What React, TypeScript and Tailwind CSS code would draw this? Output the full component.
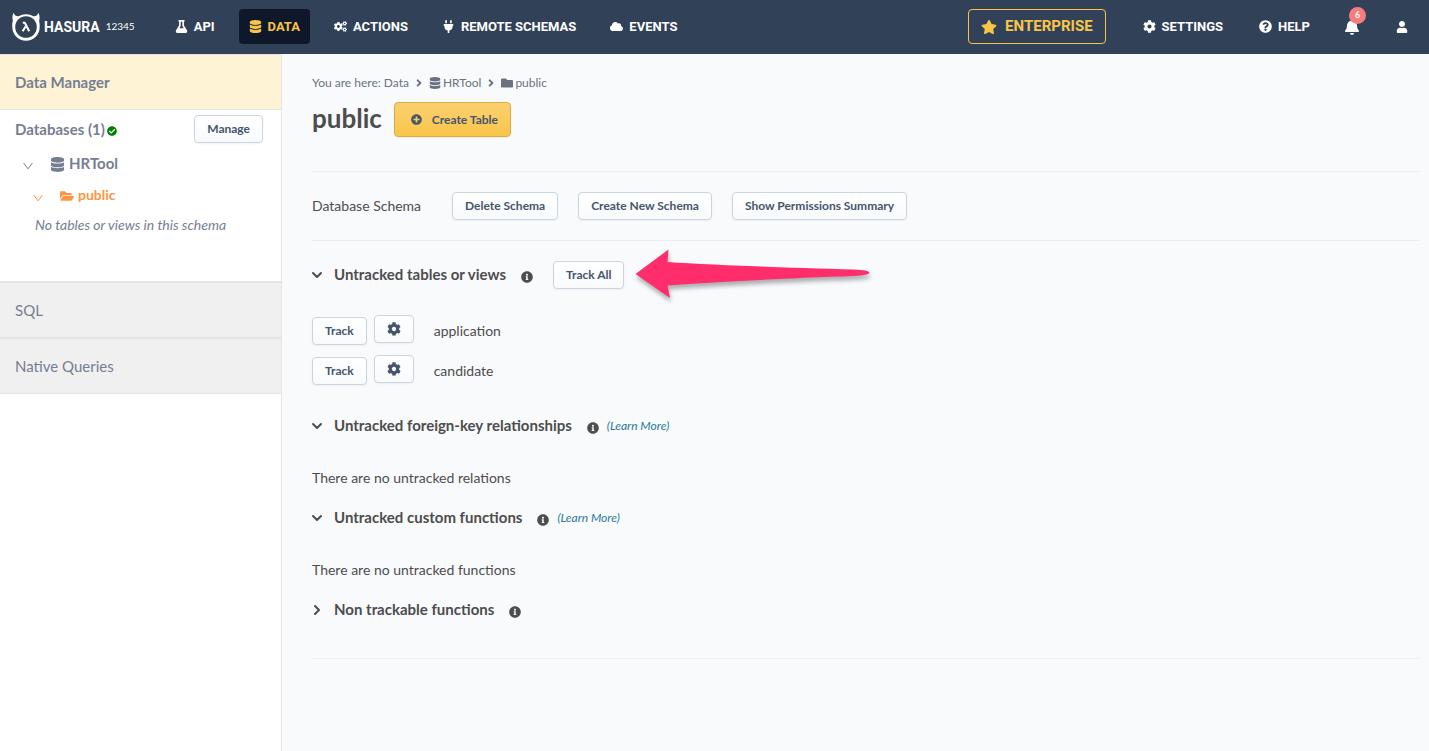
import React from "react";
import {
	FaBell,
	FaCheckCircle,
	FaCloud,
	FaCog,
	FaCogs,
	FaDatabase,
	FaFolder,
	FaFolderOpen,
	FaInfoCircle,
	FaPlug,
	FaPlusCircle,
	FaQuestionCircle,
	FaStar,
	FaAngleRight,
	FaUser,
} from "react-icons/fa";
import { FaFlask } from "react-icons/fa6";
import { ChevronDown, ChevronRight } from "lucide-react";
import clsx from "clsx";

interface NavItemProps {
	icon: React.ReactNode;
	label: string;
	active?: boolean;
}

const NavItem: React.FC<NavItemProps> = ({ icon, label, active = false }) => (
	<a
		href="#"
		className={clsx(
			"flex h-[35px] items-center gap-[6px] rounded px-[10px] font-['Roboto'] text-[13px] font-bold whitespace-nowrap",
			active ? "bg-slate-900 text-[#f9c548]" : "text-white"
		)}
	>
		<span className="flex w-[13px] justify-center">{icon}</span>
		{label}
	</a>
);

const Button: React.FC<React.ButtonHTMLAttributes<HTMLButtonElement>> = ({ className, ...props }) => (
	<button
		type="button"
		className={clsx(
			"flex h-7 items-center justify-center rounded border border-slate-300 bg-linear-to-b from-white to-slate-50 px-3 text-xs font-bold whitespace-nowrap text-slate-600 shadow-xs",
			className
		)}
		{...props}
	/>
);

const Logo = () => (
	<a href="#" className="flex items-center gap-1 text-white" aria-label="Hasura">
		<svg width="28" height="29" viewBox="0 0 28 29" fill="none">
			<path
				d="M1.6.8C.2 3.600.1 6.200.9 8.700A13.700 13.700 0 0 0 .3 15a13.700 13.700 0 0 0 27.400 0c0-2.300-.1-4.300-.6-6.300.8-2.500.7-5.100-.7-7.900-.8 2.500-2.500 3.700-5 3.500A13.700 13.700 0 0 0 14 2.300c-2.700 0-5.200.7-7.400 2C4.100 4.500 2.400 3.300 1.600.8Z"
				fill="currentColor"
			/>
			<circle cx="14" cy="15" r="10.800" fill="#334155" />
			<path
				d="M10.800 10.700h2l4.400 8.600M13.600 14.400l-3 4.900"
				stroke="currentColor"
				strokeWidth="2"
				strokeLinejoin="round"
			/>
		</svg>
		<span className="font-['Roboto'] text-sm font-bold">HASURA</span>
	</a>
);

const Header = () => (
	<header className="flex h-[54px] items-center bg-slate-700 pr-[21px] pb-px pl-3">
		<Logo />
		<span className="ml-[6px] text-[10px] text-white">12345</span>
		<nav className="ml-[30px] flex gap-[14px]">
			<NavItem icon={<FaFlask />} label="API" />
			<NavItem icon={<FaDatabase />} label="DATA" active />
			<NavItem icon={<FaCogs />} label="ACTIONS" />
			<NavItem icon={<FaPlug />} label="REMOTE SCHEMAS" />
			<NavItem icon={<FaCloud />} label="EVENTS" />
		</nav>
		<div className="ml-auto flex items-center">
			<a
				href="#"
				className="mr-[27px] flex h-[35px] items-center gap-2 rounded border border-[#f9c548] px-3 font-['Roboto'] text-[15px] font-bold text-[#f9c548]"
			>
				<FaStar className="size-4" />
				ENTERPRISE
			</a>
			<div className="flex gap-4">
				<NavItem icon={<FaCog />} label="SETTINGS" />
				<NavItem icon={<FaQuestionCircle />} label="HELP" />
			</div>
			<button type="button" className="relative ml-6 text-white" aria-label="Notifications">
				<FaBell className="size-4" />
				<span className="absolute -top-3 left-[5px] flex size-[17px] items-center justify-center rounded-full bg-[#f87c7c] text-[9px] font-bold">
					6
				</span>
			</button>
			<button type="button" className="ml-9 text-white" aria-label="Account">
				<FaUser className="size-3" />
			</button>
		</div>
	</header>
);

const TreeArrow = () => (
	<svg className="mt-[6px]" width="10" height="8" viewBox="0 0 10 8" fill="none" stroke="currentColor">
		<path d="M.6 1 5 6.800 9.400 1" />
	</svg>
);

const Sidebar = () => (
	<aside className="w-[282px] shrink-0 border-r border-[#e5e5e5] bg-white text-[15px] text-[#767e93]">
		<a
			href="#"
			className="flex h-14 items-center border-y border-[#e5e5e5] bg-[#fff3d5] px-[15px] font-bold"
		>
			Data Manager
		</a>
		<div className="h-[171px] pt-[5px]">
			<div className="flex h-7 items-center pr-[18px] pl-[15px]">
				<span className="font-bold">Databases (1)</span>
				<FaCheckCircle className="mt-1 ml-[2px] size-[10px] text-[#008000]" />
				<Button className="ml-auto">Manage</Button>
			</div>
			<div className="mt-2 flex h-6 items-center pl-[23px] font-bold">
				<TreeArrow />
				<FaDatabase className="mt-[2px] mr-1 ml-[17px] size-[15px]" />
				HRTool
			</div>
			<div className="mt-2 flex h-6 items-center pl-[33px] text-sm font-bold text-[#fd9540]">
				<TreeArrow />
				<FaFolderOpen className="mt-[2px] mr-1 ml-[17px] size-[14px]" />
				public
			</div>
			<p className="mt-[6px] pl-[35px] text-sm leading-6 italic">No tables or views in this schema</p>
		</div>
		<a href="#" className="flex h-14 items-center border-t-2 border-[#e5e5e5] bg-[#f0f0f0] px-[15px]">
			SQL
		</a>
		<a
			href="#"
			className="flex h-[57px] items-center border-t-2 border-b border-[#e5e5e5] bg-[#f0f0f0] px-[15px]"
		>
			Native Queries
		</a>
	</aside>
);

interface SectionTitleProps {
	title: string;
	open?: boolean;
	learnMore?: boolean;
	children?: React.ReactNode;
}

const SectionTitle: React.FC<SectionTitleProps> = ({ title, open = true, learnMore = false, children }) => (
	<div className="flex h-7 items-center">
		<button type="button" className="flex items-center gap-[9px] text-[15px] font-bold">
			{open ? (
				<ChevronDown className="-ml-[3px] size-4" strokeWidth={3} />
			) : (
				<ChevronRight className="-ml-[3px] size-4" strokeWidth={3} />
			)}
			{title}
		</button>
		<FaInfoCircle className="mt-[3px] ml-[15px] size-3" />
		{learnMore && (
			<a href="#" className="ml-2 text-xs text-[#27799a] italic">
				(Learn More)
			</a>
		)}
		{children}
	</div>
);

const tables = ["application", "candidate"];

const Content = () => (
	<main className="min-w-0 flex-1 pt-[19px] pr-[9px] pl-[30px] text-sm text-[#4d4d4d]">
		<div className="flex h-5 items-center text-xs text-gray-500">
			<span>You are here: Data</span>
			<FaAngleRight className="mx-1 size-3" />
			<FaDatabase className="mr-[2px] size-3" />
			HRTool
			<FaAngleRight className="mx-1 size-3" />
			<FaFolder className="mr-[2px] size-3" />
			public
		</div>
		<div className="mt-[9px] flex items-start gap-3">
			<h1 className="text-[26px] leading-8 font-bold">public</h1>
			<button
				type="button"
				className="flex h-[35px] items-center gap-[10px] rounded border border-[#d9ad42] bg-linear-to-b from-[#fad070] to-[#f9c548] px-3 pl-4 text-xs font-bold text-slate-600 shadow-xs"
			>
				<FaPlusCircle className="size-[11px]" />
				Create Table
			</button>
		</div>
		<div className="mt-[34px] flex h-[70px] items-center gap-5 border-y border-[#edeff1]">
			<span className="w-[120px]">Database Schema</span>
			<Button>Delete Schema</Button>
			<Button>Create New Schema</Button>
			<Button>Show Permissions Summary</Button>
		</div>

		<div className="relative mt-5">
			<SectionTitle title="Untracked tables or views">
				<Button className="ml-5">Track All</Button>
			</SectionTitle>
			{/* callout arrow pointing at the Track All button */}
			<svg
				className="absolute -top-4 left-[320px] drop-shadow-[1px_4px_2px_rgba(0,0,0,0.3)]"
				width="242"
				height="60"
				viewBox="0 0 242 60"
			>
				<path
					d="M3.500 29 36.500 4.500 35.500 17C80 20 160 23 222 24.500Q237 25 237.500 27.500Q237.500 30 222 31C160 33 80 37 35.500 40.500L38 53Z"
					fill="#ff2d6b"
				/>
			</svg>
		</div>
		<div className="mt-7 flex flex-col gap-3">
			{tables.map((name) => (
				<div key={name} className="flex h-7 items-center">
					<Button>Track</Button>
					<Button className="mb-1 ml-[7px] w-10" aria-label={`Customize ${name}`}>
						<FaCog className="size-[14px]" />
					</Button>
					<span className="ml-5">{name}</span>
				</div>
			))}
		</div>

		<div className="mt-[27px]">
			<SectionTitle title="Untracked foreign-key relationships" learnMore />
			<p className="mt-7 leading-5">There are no untracked relations</p>
		</div>
		<div className="mt-4">
			<SectionTitle title="Untracked custom functions" learnMore />
			<p className="mt-7 leading-5">There are no untracked functions</p>
		</div>
		<div className="mt-4 border-b border-[#edeff1] pb-[34px]">
			<SectionTitle title="Non trackable functions" open={false} />
		</div>
	</main>
);

const App = () => (
	<div className="flex min-h-screen flex-col bg-[#f9fafc] font-['Lato',sans-serif]">
		<Header />
		<div className="flex flex-1">
			<Sidebar />
			<Content />
		</div>
	</div>
);

export default App;
